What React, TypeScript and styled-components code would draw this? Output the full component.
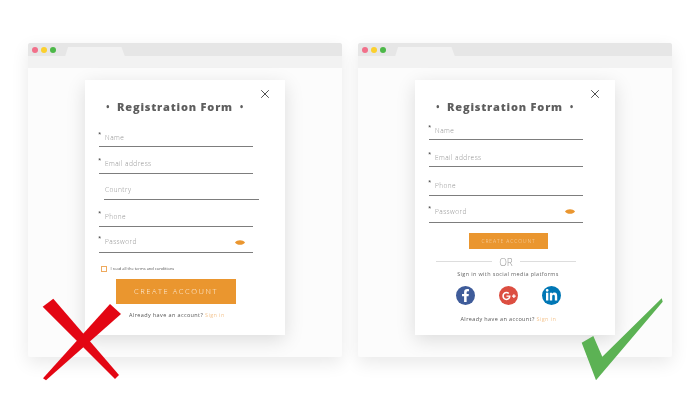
import { createGlobalStyle, styled } from 'styled-components'
import { X } from 'lucide-react'
import { FaFacebookF, FaGooglePlusG, FaLinkedinIn } from 'react-icons/fa'

const GlobalStyle = createGlobalStyle`
  html, body { margin: 0; padding: 0; background: #fff; }
  body { font-family: "Open Sans", "DejaVu Sans", sans-serif; width: 700px; height: 400px; overflow: hidden; }
`

const Page = styled.div`
  display: flex;
  gap: 16px;
  padding: 43px 0 0 28px;
  filter: blur(0.25px);
`

const Browser = styled.div`
  position: relative;
  width: 314px;
  height: 314px;
  display: flex;
  flex-direction: column;
  background: #fcfcfc;
  border-radius: 2px;
  box-shadow: 0 6px 18px rgba(0, 0, 0, 0.09);
`

const TitleBar = styled.div`
  height: 13px;
  display: flex;
  align-items: center;
  gap: 2.7px;
  padding-left: 4.3px;
  background: #e6e6e6;
  border-radius: 2px 2px 0 0;
`

const Dot = styled.span<{ $color: string }>`
  width: 6px;
  height: 6px;
  border-radius: 50%;
  background: ${p => p.$color};
`

const Tab = styled.div`
  width: 59.5px;
  height: 9.5px;
  margin: 3.5px 0 0 6.9px;
  background: #f2f2f2;
  clip-path: polygon(3px 0, 56px 0, 59.5px 100%, 0 100%);
`

const Toolbar = styled.div`
  height: 11.5px;
  background: #f2f2f2;
`

const Viewport = styled.div`
  flex: 1;
  padding: 12.5px 0 0 57px;
`

const Card = styled.div`
  position: relative;
  width: 200px;
  height: 255px;
  display: flex;
  flex-direction: column;
  background: #fff;
  box-shadow: 0 5px 18px rgba(0, 0, 0, 0.13);
`

const Close = styled.button`
  position: absolute;
  top: 7px;
  right: 13.5px;
  display: flex;
  padding: 0;
  border: 0;
  background: none;
  color: #444;
`

const Title = styled.h1`
  margin: 20px 0 0;
  height: 14px;
  display: flex;
  justify-content: center;
  gap: 7px;
  padding-right: 20px;
  font-size: 11px;
  line-height: 14px;
  font-weight: 800;
  letter-spacing: 0.8px;
  white-space: nowrap;
  color: #5e5e5e;
`

const Fields = styled.div<{ $top: number }>`
  display: flex;
  flex-direction: column;
  margin-top: ${p => p.$top}px;
`

const Field = styled.div<{ $height: number; $gap: number; $indented?: boolean }>`
  box-sizing: border-box;
  height: ${p => p.$height}px;
  width: ${p => (p.$indented ? 155 : 154)}px;
  margin-left: ${p => (p.$indented ? 19 : 14)}px;
  display: flex;
  align-items: flex-end;
  border-bottom: 1px solid #7d7d7d;
  padding-bottom: ${p => p.$gap}px;
`

const Star = styled.span`
  width: 6.5px;
  align-self: flex-end;
  margin-bottom: 6px;
  margin-left: -1px;
  font-size: 6px;
  line-height: 6px;
  color: #333;
`

const Placeholder = styled.span<{ $indented?: boolean }>`
  flex: 1;
  margin-left: ${p => (p.$indented ? 1 : 0.5)}px;
  font-size: 6.5px;
  line-height: 10px;
  font-weight: 300;
  letter-spacing: 0.45px;
  color: #8f8f8f;
`

const Eye = styled.svg`
  width: 10px;
  height: 5px;
  margin: 0 8px 2.5px 0;
  fill: #ea962f;
`

const Terms = styled.label`
  display: flex;
  align-items: center;
  gap: 4px;
  margin: 11px 0 0 15.5px;
  height: 8px;
  font-size: 4px;
  color: #555;
`

const Box = styled.span`
  box-sizing: border-box;
  width: 6px;
  height: 6px;
  margin-top: 2px;
  border: 1px solid #eeaa5e;
`

const Cta = styled.button<{ $large?: boolean }>`
  box-sizing: border-box;
  display: block;
  padding: 0;
  border: 0;
  background: #ea962f;
  font-family: inherit;
  font-weight: 300;
  white-space: nowrap;
  color: ${p => (p.$large ? '#fdf1e2' : '#f9d9b3')};
  width: ${p => (p.$large ? 120 : 79)}px;
  height: ${p => (p.$large ? 25 : 16.5)}px;
  margin: ${p => (p.$large ? '6.5px 0 0 31px' : '10px 0 0 54px')};
  font-size: ${p => (p.$large ? 7.5 : 5)}px;
  letter-spacing: ${p => (p.$large ? 1.55 : 0.9)}px;
`

const Account = styled.p<{ $top: number; $left: number }>`
  margin: ${p => p.$top}px 0 0 ${p => p.$left}px;
  font-size: 5.5px;
  line-height: 8px;
  letter-spacing: 0.38px;
  font-weight: 400;
  white-space: nowrap;
  color: #555;
`

const SignIn = styled.a`
  color: #f4c795;
`

const OrRow = styled.div`
  display: flex;
  align-items: center;
  justify-content: center;
  gap: 7px;
  margin: 6px 0 0 21px;
  width: 140px;
  height: 13px;
  font-size: 10px;
  font-weight: 300;
  color: #999;
`

const OrLine = styled.span`
  flex: 1;
  height: 1px;
  background: #ddd;
`

const SocialText = styled.p`
  margin: 1px 0 0;
  padding-right: 14px;
  text-align: center;
  font-size: 5.5px;
  line-height: 10px;
  font-weight: 400;
  letter-spacing: 0.36px;
  color: #666;
`

const Socials = styled.div`
  display: flex;
  gap: 24px;
  margin: 7px 0 0 41px;
  align-items: center;
`

const Social = styled.a<{ $color: string }>`
  width: 19px;
  height: 19px;
  border-radius: 50%;
  display: flex;
  align-items: center;
  justify-content: center;
  color: #fff;
  background: ${p => p.$color};
`

const Mark = styled.svg<{ $left: number }>`
  position: absolute;
  left: ${p => p.$left}px;
  top: 255px;
  width: 84px;
  height: 84px;
`

const Bullet = styled.span`
  font-size: 8px;
`

const chrome = (
  <>
    <TitleBar>
      <Dot $color="#f2708a" />
      <Dot $color="#fbd02e" />
      <Dot $color="#4cb848" />
      <Tab />
    </TitleBar>
    <Toolbar />
  </>
)

const heading = (
  <>
    <Close aria-label="Close">
      <X size={14} strokeWidth={1.6} />
    </Close>
    <Title>
      <Bullet>•</Bullet>
      Registration Form
      <Bullet>•</Bullet>
    </Title>
  </>
)

const eye = (
  <Eye viewBox="0 0 10 5">
    <path d="M0 2.5C2-.6 8-.6 10 2.5 8 5.6 2 5.6 0 2.5Z" />
  </Eye>
)

function FormField({ label, height, gap, starred = true, indented, secret }: {
  label: string
  height: number
  gap: number
  starred?: boolean
  indented?: boolean
  secret?: boolean
}) {
  return (
    <Field $height={height} $gap={gap} $indented={indented}>
      {starred && <Star>*</Star>}
      <Placeholder $indented={indented}>{label}</Placeholder>
      {secret && eye}
    </Field>
  )
}

export default function App() {
  return (
    <>
      <GlobalStyle />
      <Page>
        <Browser>
          {chrome}
          <Viewport>
            <Card>
              {heading}
              <Fields $top={6}>
                <FormField label="Name" height={27} gap={3.2} />
                <FormField label="Email address" height={26.5} gap={3.7} />
                <FormField label="Country" height={26.5} gap={4.3} starred={false} indented />
                <FormField label="Phone" height={27} gap={3.9} />
                <FormField label="Password" height={26} gap={4.8} secret />
              </Fields>
              <Terms>
                <Box />
                I read all the terms and conditions
              </Terms>
              <Cta $large>CREATE ACCOUNT</Cta>
              <Account $top={7} $left={44}>
                Already have an account? <SignIn>Sign in</SignIn>
              </Account>
            </Card>
          </Viewport>
          <Mark $left={14} viewBox="0 0 84 84">
            <path fill="#e30613" d="M.7 8.7 11.3.7 77 77l-4 4z" />
            <path fill="#e30613" d="M68 6 79 16 4 82.3 1 80.3z" />
          </Mark>
        </Browser>
        <Browser>
          {chrome}
          <Viewport>
            <Card>
              {heading}
              <Fields $top={0}>
                <FormField label="Name" height={26} gap={2.6} />
                <FormField label="Email address" height={27} gap={3.5} />
                <FormField label="Phone" height={29} gap={4} />
                <FormField label="Password" height={26.5} gap={4.9} secret />
              </Fields>
              <Cta>CREATE ACCOUNT</Cta>
              <OrRow>
                <OrLine />
                OR
                <OrLine />
              </OrRow>
              <SocialText>Sign in with social media platforms</SocialText>
              <Socials>
                <Social $color="#3f5c9a"><FaFacebookF size={13} /></Social>
                <Social $color="#dc4e41"><FaGooglePlusG size={14} /></Social>
                <Social $color="#0077b5"><FaLinkedinIn size={13} /></Social>
              </Socials>
              <Account $top={10} $left={45.5}>
                Already have an account? <SignIn>Sign in</SignIn>
              </Account>
            </Card>
          </Viewport>
          <Mark $left={223} viewBox="0 0 84 84">
            <path fill="#5cb254" d="M.7 44.7 12.3 38 21.3 58.7 80.7.3 81.7 3.7 15 82.3z" />
          </Mark>
        </Browser>
      </Page>
    </>
  )
}
